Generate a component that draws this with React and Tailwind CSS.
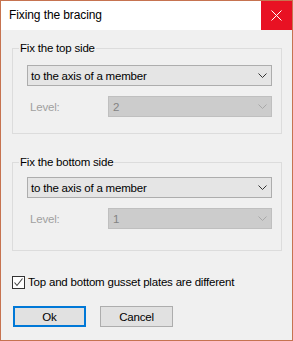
import React from "react";

const Chevron = ({ color }) => (
  <svg width="9" height="5" viewBox="0 0 9 5" className="shrink-0">
    <path d="M0.5 0.5 L4.5 4.5 L8.5 0.5" fill="none" stroke={color} strokeWidth="1" />
  </svg>
);

const Combo = ({ value, disabled }) => (
  <div
    className={
      disabled
        ? "flex-1 h-[21px] flex items-center justify-between border border-[#bfbfbf] bg-[#cccccc] pl-[4px] pr-[4px] text-[#838383]"
        : "h-[21px] flex items-center justify-between border border-[#adadad] bg-[#e5e5e5] pl-[3px] pr-[4px] text-black"
    }
  >
    <span>{value}</span>
    <Chevron color={disabled ? "#a8a8a8" : "#333333"} />
  </div>
);

const Group = ({ title, level, className, bodyClass }) => (
  <fieldset className={`border border-[#dcdcdc] px-[6px] ${className}`}>
    <legend className="px-[1px] leading-[16px] text-black">{title}</legend>
    <div className={`pl-[8px] pr-[3px] ${bodyClass}`}>
      <Combo value="to the axis of a member" />
      <div className="flex items-center mt-[10px]">
        <span className="w-[81px] pl-[3px] text-[#a0a0a0]">Level:</span>
        <Combo value={level} disabled />
      </div>
    </div>
  </fieldset>
);

export default function App() {
  return (
    <div className="w-[293px] h-[341px] border border-[#c67350] bg-[#f0f0f0] flex flex-col font-['Liberation_Sans',Arial,sans-serif] text-[11.5px] tracking-[-0.2px] leading-[16px] select-none">
      {/* Title bar */}
      <div className="h-[29px] bg-white flex items-center justify-between shrink-0">
        <span className="pl-[8px] pb-[1px] text-[12px] tracking-[-0.1px] text-black">Fixing the bracing</span>
        <button className="w-[31px] h-full bg-[#e81123] flex items-center justify-center">
          <svg width="11" height="11" viewBox="0 0 11 11">
            <path d="M0.5 0.5 L10.5 10.5 M10.5 0.5 L0.5 10.5" stroke="white" strokeWidth="1" />
          </svg>
        </button>
      </div>

      <div className="flex-1 flex flex-col pl-[11px] pr-[10px]">
        <Group title="Fix the top side" level="2" className="mt-[10px]" bodyClass="pt-[9px] pb-[16px]" />
        <Group title="Fix the bottom side" level="1" className="mt-[20px]" bodyClass="pt-[7px] pb-[21px]" />

        {/* Checkbox */}
        <div className="flex items-center h-[16px] mt-[23px]">
          <div className="w-[13px] h-[13px] border border-[#333333] bg-white flex items-center justify-center">
            <svg width="11" height="11" viewBox="0 0 11 11">
              <path d="M1.5 5.5 L4 8.5 L9.5 1.5" fill="none" stroke="#444444" strokeWidth="1.1" />
            </svg>
          </div>
          <span className="ml-[3px] text-black">Top and bottom gusset plates are different</span>
        </div>

        {/* Buttons */}
        <div className="flex mt-[16px] ml-[1px] gap-[14px]">
          <button className="w-[73px] h-[21px] border-2 border-[#0078d7] bg-[#e1e1e1] text-black flex items-center justify-center">
            Ok
          </button>
          <button className="w-[73px] h-[21px] border border-[#adadad] bg-[#e1e1e1] text-black flex items-center justify-center">
            Cancel
          </button>
        </div>
      </div>
    </div>
  );
}
